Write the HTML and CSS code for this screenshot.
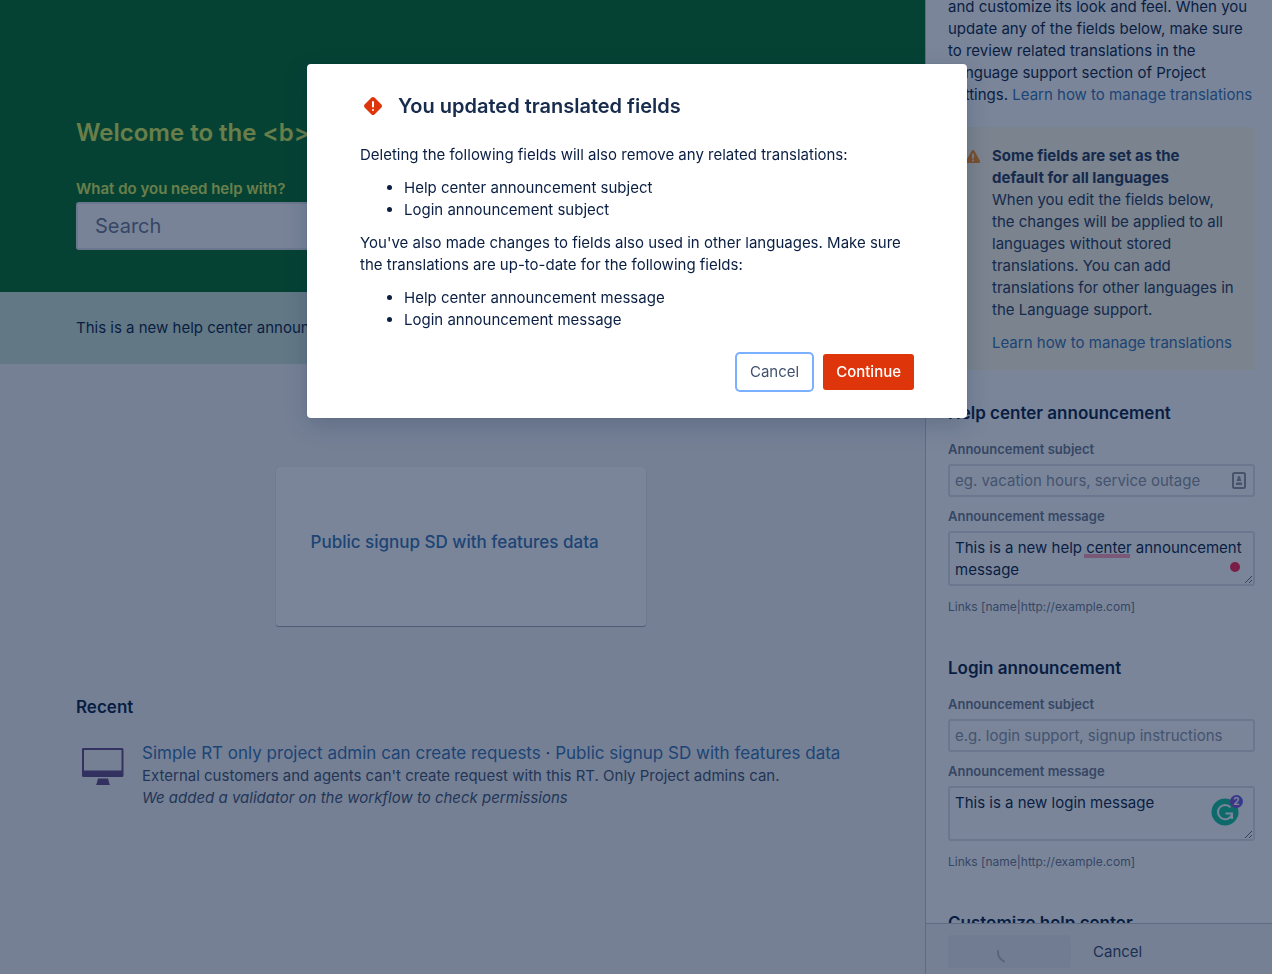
FILE: index.html
```html
<!DOCTYPE html>
<html lang="en">
<head>
<meta charset="utf-8">
<meta name="viewport" content="width=device-width, initial-scale=1">
<title>Help center</title>
<link rel="stylesheet" href="styles.css">
</head>
<body>
<div class="app">
  <main class="portal">
    <header class="banner">
      <h1 class="banner-title">Welcome to the &lt;b&gt;</h1>
      <label class="banner-label" for="search">What do you need help with?</label>
      <input class="search" id="search" type="text" placeholder="Search">
    </header>
    <p class="notice">This is a new help center announcement message</p>
    <div class="portal-body">
      <a class="project-card" href="#">Public signup SD with features data</a>
      <section>
        <h2 class="section-title">Recent</h2>
        <div class="request">
          <svg class="request-icon" width="42" height="38" viewBox="0 0 42 38" aria-hidden="true">
            <path fill="#654982" fill-rule="evenodd" d="M1 0H40Q41.500 0 41.500 1.500V27.500Q41.500 29 40 29H1.500Q0 29 0 27.500V1.500Q0 0 1 0ZM2 2V22.500H39.500V2Z"/>
            <path fill="#654982" d="M16 30.500H26L27.500 36L28 37H14L14.500 36Z"/>
          </svg>
          <div class="request-text">
            <div class="request-title"><a href="#">Simple RT only project admin can create requests</a> · <a href="#">Public signup SD with features data</a></div>
            <p>External customers and agents can't create request with this RT. Only Project admins can.</p>
            <p><em>We added a validator on the workflow to check permissions</em></p>
          </div>
        </div>
      </section>
    </div>
  </main>

  <aside class="settings">
    <div class="settings-scroll">
      <p class="intro">and customize its look and feel. When you update any of the fields below, make sure to review related translations in the Language support section of Project settings. <a href="#">Learn how to manage translations</a></p>
      <div class="warning">
        <svg class="warning-icon" width="16" height="16" viewBox="0 0 16 16" aria-hidden="true">
          <path fill="#ff8b1a" d="M6.500 2Q8 0 9.500 2L15 12Q15.800 14 14 14H2Q.2 14 1 12Z"/>
          <path stroke="#fffae6" stroke-width="1.800" stroke-linecap="round" d="M8 5.500V8.800M8 11.500V11.600"/>
        </svg>
        <div class="warning-text">
          <strong class="warning-title">Some fields are set as the default for all languages</strong>
          <p>When you edit the fields below, the changes will be applied to all languages without stored translations. You can add translations for other languages in the Language support.</p>
          <a href="#">Learn how to manage translations</a>
        </div>
      </div>

      <section class="group">
        <h2 class="group-title">Help center announcement</h2>
        <label class="field-label" for="hc-subject">Announcement subject</label>
        <div class="field">
          <input class="text-input" id="hc-subject" type="text" placeholder="eg. vacation hours, service outage">
          <svg class="autofill" width="14" height="18" viewBox="0 0 14 18" aria-hidden="true">
            <rect x="1" y="1" width="12" height="15" rx="1.500" fill="none" stroke="#8f939b" stroke-width="2"/>
            <circle cx="7" cy="5.500" r="1.500" fill="#8f939b"/>
            <path fill="#8f939b" d="M5.500 6.500H8.500L9.500 9H4.500ZM4 10.500H10V13H4Z"/>
          </svg>
        </div>
        <label class="field-label" for="hc-message">Announcement message</label>
        <div class="field">
          <textarea class="text-area" id="hc-message" rows="2" spellcheck="false">This is a new help center announcement message</textarea>
          <span class="spelling"></span>
          <span class="alert-dot"></span>
        </div>
        <p class="hint">Links [name|http://example.com]</p>
      </section>

      <section class="group">
        <h2 class="group-title">Login announcement</h2>
        <label class="field-label" for="lg-subject">Announcement subject</label>
        <div class="field">
          <input class="text-input" id="lg-subject" type="text" placeholder="e.g. login support, signup instructions">
        </div>
        <label class="field-label" for="lg-message">Announcement message</label>
        <div class="field">
          <textarea class="text-area" id="lg-message" rows="2" spellcheck="false">This is a new login message</textarea>
          <svg class="checker" width="28" height="28" viewBox="0 0 28 28" aria-hidden="true">
            <circle cx="14" cy="14" r="13.500" fill="#15c39a"/>
            <path fill="none" stroke="#fff" stroke-width="2" d="M19.500 9.300A7.200 7.200 0 1 0 20.500 17.500M14.500 15.500H21V21"/>
          </svg>
          <span class="checker-count">2</span>
        </div>
        <p class="hint">Links [name|http://example.com]</p>
      </section>

      <section class="group">
        <h2 class="group-title">Customize help center</h2>
      </section>
    </div>
    <footer class="settings-footer">
      <button class="save" type="button" aria-label="Saving" disabled>
        <svg width="14" height="14" viewBox="0 0 14 14" aria-hidden="true">
          <path fill="none" stroke="#b3bac5" stroke-width="2" stroke-linecap="round" d="M3 2Q2.500 9 9 12.500"/>
        </svg>
      </button>
      <button class="link-button" type="button">Cancel</button>
    </footer>
  </aside>
</div>

<div class="blanket">
  <div class="dialog" role="alertdialog" aria-modal="true" aria-labelledby="dialog-title">
    <h2 class="dialog-title" id="dialog-title">
      <svg width="26" height="26" viewBox="0 0 26 26" aria-hidden="true">
        <path fill="#de350b" d="M11.500 4.600Q13 3.200 14.500 4.600L21.400 11.500Q22.800 13 21.400 14.500L14.500 21.400Q13 22.800 11.500 21.400L4.600 14.500Q3.200 13 4.600 11.500Z"/>
        <path stroke="#fff" stroke-width="2" stroke-linecap="round" d="M13 9V13.500M13 17V17.100"/>
      </svg>
      You updated translated fields
    </h2>
    <div class="dialog-body">
      <p>Deleting the following fields will also remove any related translations:</p>
      <ul>
        <li>Help center announcement subject</li>
        <li>Login announcement subject</li>
      </ul>
      <p>You've also made changes to fields also used in other languages. Make sure the translations are up-to-date for the following fields:</p>
      <ul>
        <li>Help center announcement message</li>
        <li>Login announcement message</li>
      </ul>
    </div>
    <div class="dialog-actions">
      <button class="button button-focus" type="button">Cancel</button>
      <button class="button button-danger" type="button">Continue</button>
    </div>
  </div>
</div>
</body>
</html>
```

FILE: styles.css
```css
* {
  box-sizing: border-box;
}

body {
  margin: 0;
  font: 15px/22px Inter, "Liberation Sans", sans-serif;
  color: #091e42;
}

h1, h2, p, ul {
  margin: 0;
}

a {
  color: #3572b0;
  text-decoration: none;
}

button, input, textarea {
  font: inherit;
  color: inherit;
}

.app {
  display: grid;
  grid-template-columns: 1fr 347px;
  height: 100vh;
  overflow: hidden;
}

/* Portal preview */

.portal {
  min-width: 0;
  background: #f4f5f7;
}

.banner {
  display: flex;
  flex-direction: column;
  align-items: flex-start;
  padding: 117px 76px 42px;
  background: #006e24;
  color: #dcf056;
}

.banner-title {
  margin-bottom: 29px;
  font-size: 24px;
  line-height: 32px;
  font-weight: 600;
}

.banner-label {
  margin-bottom: 2px;
  font-weight: 600;
}

.search {
  width: 100%;
  max-width: 660px;
  height: 48px;
  padding: 0 17px;
  border: 2px solid #dfe1e6;
  border-radius: 3px;
  background: #fafbfc;
  font-size: 20px;
}

.search::placeholder {
  color: #6b778c;
  opacity: 1;
}

.notice {
  padding: 25px 76px;
  background: #cde2d4;
}

.portal-body {
  display: flex;
  flex-direction: column;
  padding: 103px 80px 40px 76px;
}

.project-card {
  display: flex;
  align-items: center;
  align-self: center;
  width: 370px;
  height: 159px;
  margin-bottom: 70px;
  padding: 0 35px 10px;
  border-radius: 3px;
  background: #fff;
  box-shadow: 0 1px 1px #97a0af, 0 0 1px #c1c7d0;
  font-size: 17px;
  font-weight: 500;
}

.section-title {
  font-size: 17px;
  font-weight: 600;
}

.request {
  display: flex;
  gap: 18px;
  padding: 23px 0 0 6px;
}

.request-icon {
  flex: none;
  margin-top: 7px;
}

.request-text {
  color: #42526e;
}

.request-title {
  font-size: 17px;
  line-height: 24px;
}

/* Settings panel */

.settings {
  display: flex;
  flex-direction: column;
  min-height: 0;
  border-left: 1px solid #c1c7d0;
  background: #fff;
}

.settings-scroll {
  flex: 1;
  min-height: 0;
  padding: 0 17px 0 22px;
  overflow: hidden;
}

.intro {
  margin: -4px 0 21px;
}

.warning {
  display: flex;
  gap: 11px;
  margin-bottom: 32px;
  padding: 18px 16px 16px 17px;
  border-radius: 3px;
  background: #fffae6;
  color: #253858;
}

.warning-icon {
  flex: none;
  margin-top: 4px;
}

.warning-title {
  display: block;
  max-width: 220px;
}

.warning-text p {
  margin-bottom: 11px;
}

.group {
  margin-bottom: 41px;
}

.group-title {
  margin-bottom: 17px;
  font-size: 17px;
  font-weight: 600;
}

.field-label {
  display: block;
  margin-bottom: 7px;
  font-size: 13px;
  line-height: 16px;
  font-weight: 600;
  color: #6b778c;
}

.field {
  position: relative;
  display: flex;
  margin-bottom: 11px;
}

.text-input,
.text-area {
  width: 100%;
  padding: 0 5px;
  border: 2px solid #dfe1e6;
  border-radius: 3px;
  background: #fff;
}

.text-input {
  height: 33px;
}

.text-input::placeholder {
  color: #8993a4;
  opacity: 1;
}

.text-area {
  height: 55px;
  padding: 4px 5px;
  overflow: hidden;
  resize: vertical;
}

.autofill {
  position: absolute;
  right: 9px;
  top: 8px;
}

.spelling {
  position: absolute;
  left: 136px;
  top: 23px;
  width: 46px;
  height: 4px;
  background: #ffa0b8;
}

.alert-dot {
  position: absolute;
  right: 15px;
  top: 31px;
  width: 10px;
  height: 10px;
  border-radius: 50%;
  background: #ff1f4f;
}

.checker {
  position: absolute;
  right: 16px;
  top: 12px;
}

.checker-count {
  position: absolute;
  right: 12px;
  top: 9px;
  width: 13px;
  height: 13px;
  border-radius: 50%;
  background: linear-gradient(60deg, #9c3fc8, #4f67f0);
  color: #fff;
  font-size: 10px;
  line-height: 13px;
  font-weight: 700;
  text-align: center;
}

.hint {
  font-size: 12px;
  line-height: 19px;
  color: #6b778c;
}

.settings-footer {
  display: flex;
  gap: 22px;
  padding: 11px 22px 6px;
  border-top: 1px solid #c1c7d0;
  background: #f4f5f7;
}

.save {
  display: flex;
  align-items: center;
  justify-content: center;
  width: 123px;
  height: 33px;
  padding: 8px 15px 0 0;
  border: 0;
  border-radius: 3px;
  background: #ebecf0;
}

.link-button {
  padding: 0;
  border: 0;
  background: none;
  color: #344563;
}

/* Confirmation dialog */

.blanket {
  position: fixed;
  inset: 0;
  display: flex;
  justify-content: center;
  align-items: flex-start;
  padding: 64px 0 0 2px;
  background: rgba(9, 30, 66, 0.54);
}

.dialog {
  width: 660px;
  max-width: 100%;
  padding: 29px 53px 28px;
  border-radius: 4px;
  background: #fff;
  box-shadow: 0 0 1px rgba(9, 30, 66, 0.3), 0 8px 24px rgba(9, 30, 66, 0.2);
}

.dialog-title {
  display: flex;
  align-items: center;
  gap: 12px;
  margin-bottom: 25px;
  font-size: 20px;
  line-height: 26px;
  font-weight: 600;
  color: #172b4d;
}

.dialog-body ul {
  margin: 11px 0;
  padding-left: 44px;
}

.dialog-actions {
  display: flex;
  justify-content: flex-end;
  gap: 11px;
  margin-top: 23px;
}

.button {
  height: 36px;
  padding: 0 13px;
  border: 0;
  border-radius: 3px;
  background: none;
}

.button-focus {
  color: #42526e;
  box-shadow: 0 0 0 2px #7ab0ff;
}

.button-danger {
  background: #de350b;
  color: #fff;
  font-weight: 500;
}
```
